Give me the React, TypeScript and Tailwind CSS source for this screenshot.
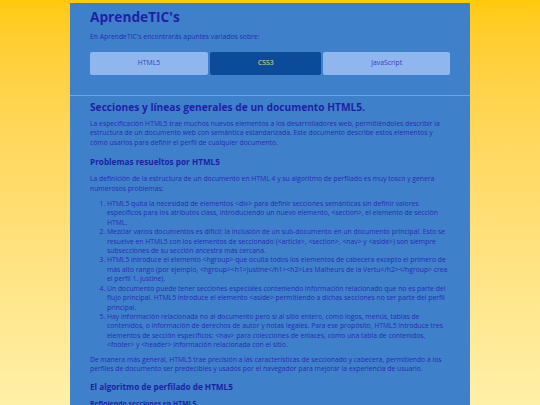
import React from 'react';

const temas = ['HTML5', 'CSS3', 'JavaScript'];

export default function App() {
  return (
    <div className="h-screen overflow-hidden bg-gradient-to-b from-[#ffca0a] to-[#fff0a8] pt-[3px] font-['Open_Sans',sans-serif] text-[#2a2ab4]">
      <div className="mx-auto w-[400px] bg-[#3f80cb]">
        <header className="border-b border-[#6ea2e0] px-5 pb-5 pt-[5px]">
          <h1 className="text-[13.7px] font-bold leading-[18px] text-[#1f1fa6]">AprendeTIC's</h1>
          <p className="mt-[6px] text-[6.8px] leading-[10px]">En AprendeTIC's encontrarás apuntes variados sobre:</p>
          <nav className="mt-[10px] flex gap-[2px]">
            {temas.map((t) => (
              <a
                key={t}
                className={
                  t === 'CSS3'
                    ? 'flex h-[23px] flex-auto items-center justify-center rounded-[2px] bg-[#0b4b99] text-[6.8px] text-[#e6e27a]'
                    : 'flex h-[23px] flex-auto items-center justify-center rounded-[2px] bg-[#8fb6ed] text-[6.8px] text-[#3b3bc0]'
                }
              >
                {t}
              </a>
            ))}
          </nav>
        </header>
        <main className="px-5 pt-1 text-[6.8px] leading-[9.4px]">
          <h2 className="text-[10.2px] font-bold leading-[14px] text-[#1f1fa6]">
            Secciones y líneas generales de un documento HTML5.
          </h2>
          <p className="mt-[5px]">
            La especificación HTML5 trae muchos nuevos elementos a los desarrolladores web, permitiéndoles describir la
            estructura de un documento web con semántica estandarizada. Este documento describe estos elementos y
            cómo usarlos para definir el perfil de cualquier documento.
          </p>
          <h3 className="mt-[9px] text-[8.2px] font-bold leading-[11px] text-[#1f1fa6]">Problemas resueltos por HTML5</h3>
          <p className="mt-[7px]">
            La definición de la estructura de un documento en HTML 4 y su algoritmo de perfilado es muy tosco y genera
            numerosos problemas:
          </p>
          <ol className="mt-[6px] list-decimal pl-[17px]">
            <li>
              HTML5 quita la necesidad de elementos &lt;div&gt; para definir secciones semánticas sin definir valores
              específicos para los atributos class, introduciendo un nuevo elemento, &lt;section&gt;, el elemento de sección
              HTML.
            </li>
            <li>
              Mezclar varios documentos es difícil: la inclusión de un sub-documento en un documento principal. Esto se
              resuelve en HTML5 con los elementos de seccionado (&lt;article&gt;, &lt;section&gt;, &lt;nav&gt; y &lt;aside&gt;) son siempre
              subsecciones de su sección ancestra más cercana.
            </li>
            <li>
              HTML5 introduce el elemento &lt;hgroup&gt; que oculta todos los elementos de cabecera excepto el primero de
              más alto rango (por ejemplo, &lt;hgroup&gt;&lt;h1&gt;Justine&lt;/h1&gt;&lt;h2&gt;Les Malheurs de la Vertu&lt;/h2&gt;&lt;/hgroup&gt; crea
              el perfil 1. Justine).
            </li>
            <li>
              Un documento puede tener secciones especiales conteniendo información relacionado que no es parte del
              flujo principal. HTML5 introduce el elemento &lt;aside&gt; permitiendo a dichas secciones no ser parte del perfil
              principal.
            </li>
            <li>
              Hay información relacionada no al documento pero si al sitio entero, como logos, menús, tablas de
              contenidos, o información de derechos de autor y notas legales. Para ese propósito, HTML5 introduce tres
              elementos de sección específicos: &lt;nav&gt; para colecciones de enlaces, como una tabla de contenidos,
              &lt;footer&gt; y &lt;header&gt; información relacionada con el sitio.
            </li>
          </ol>
          <p className="mt-[5px]">
            De manera más general, HTML5 trae precisión a las características de seccionado y cabecera, permitiendo a los
            perfiles de documento ser predecibles y usados por el navegador para mejorar la experiencia de usuario.
          </p>
          <h3 className="mt-[8px] text-[8.2px] font-bold leading-[11px] text-[#1f1fa6]">El algoritmo de perfilado de HTML5</h3>
          <h4 className="mt-[7px] text-[6.8px] font-bold leading-[9.4px] text-[#1f1fa6]">Refiniendo secciones en HTML5</h4>
          <p className="mt-[5px]">
            El contenido del elemento &lt;body&gt; y los elementos de seccionado se dividen en secciones.
          </p>
        </main>
      </div>
    </div>
  );
}
